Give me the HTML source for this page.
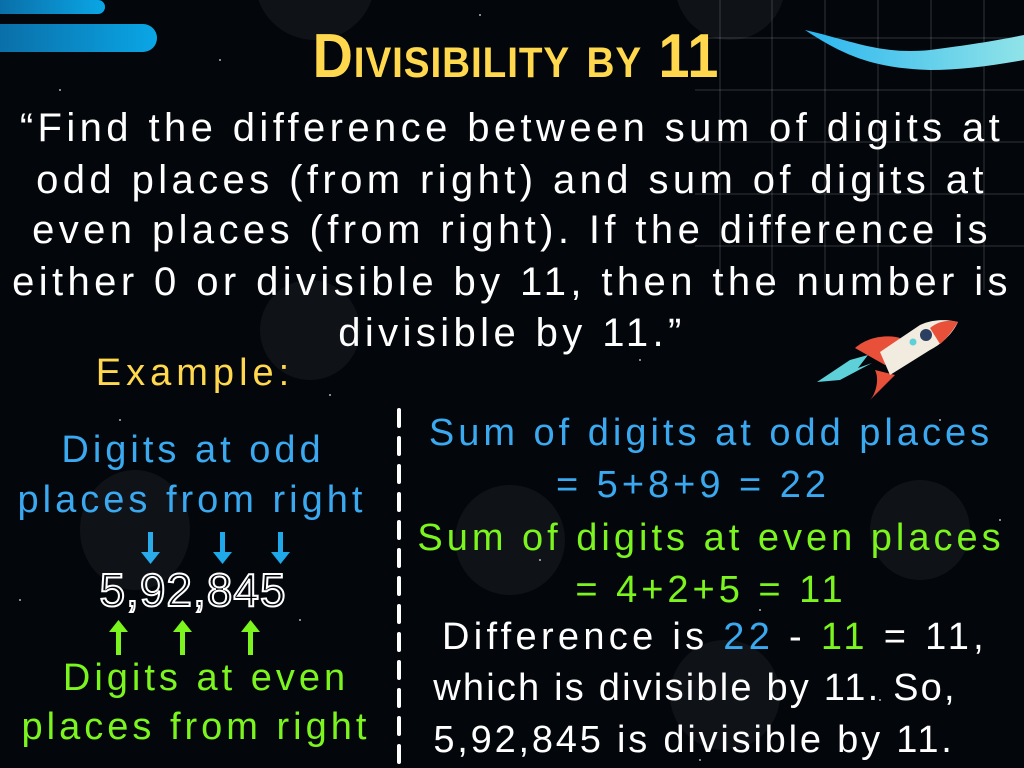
<!DOCTYPE html>
<html><head><meta charset="utf-8"><style>
body{margin:0;width:1024px;height:768px;overflow:hidden;background:#03070c;font-family:"Liberation Sans",sans-serif;position:relative}
.l{position:absolute;left:0;width:1024px;text-align:center;white-space:nowrap;height:44px;line-height:44px}
.q{color:#fff;font-size:40px;letter-spacing:4.4px}
.r{color:#3ba9f0;font-size:38px;letter-spacing:4px}
.g{color:#7cf51f}
.c{position:absolute;border-radius:50%;background:rgba(255,255,255,0.05)}
</style></head><body>
<svg width="1024" height="768" style="position:absolute;left:0;top:0">
<defs><linearGradient id="b" x1="0" x2="1"><stop offset="0" stop-color="#0a6fa8"/><stop offset="1" stop-color="#0aa6e6"/></linearGradient>
<linearGradient id="br" x1="0" x2="1"><stop offset="0" stop-color="#2bb6ef"/><stop offset="1" stop-color="#8fe3e8"/></linearGradient></defs>
<g stroke="rgba(255,255,255,0.18)" stroke-width="1">
<line x1="720" y1="0" x2="720" y2="290"/><line x1="772" y1="0" x2="772" y2="290"/><line x1="825" y1="0" x2="825" y2="290"/><line x1="878" y1="0" x2="878" y2="290"/><line x1="931" y1="0" x2="931" y2="290"/><line x1="984" y1="0" x2="984" y2="290"/>
<line x1="695" y1="38" x2="1024" y2="38"/><line x1="695" y1="90" x2="1024" y2="90"/><line x1="695" y1="142" x2="1024" y2="142"/><line x1="695" y1="194" x2="1024" y2="194"/><line x1="695" y1="246" x2="1024" y2="246"/>
</g>
<path d="M0 0H98a7 7 0 0 1 0 14H0Z" fill="url(#b)"/>
<path d="M0 24H143a14 14 0 0 1 0 28H0Z" fill="url(#b)"/>
<path d="M805 30 C850 40 880 55 930 50 C970 45 1000 40 1024 35 V60 C990 66 960 70 930 70 C880 68 850 60 805 30Z" fill="url(#br)"/>
<g fill="#fff" opacity="0.7">
<circle cx="60" cy="90" r="1"/><circle cx="220" cy="60" r="1"/><circle cx="480" cy="15" r="1"/><circle cx="640" cy="360" r="1"/><circle cx="330" cy="395" r="1"/><circle cx="760" cy="610" r="1"/><circle cx="940" cy="420" r="1"/><circle cx="120" cy="420" r="1"/><circle cx="540" cy="560" r="1"/><circle cx="880" cy="700" r="1"/><circle cx="300" cy="620" r="1"/><circle cx="20" cy="600" r="1"/><circle cx="700" cy="760" r="1"/><circle cx="1000" cy="520" r="1"/>
</g>
<g stroke="#fff" stroke-width="4" stroke-linecap="round" stroke-dasharray="16 12"><line x1="399" y1="410" x2="399" y2="768"/></g>
<g fill="#1fa8ea"><rect x="148" y="532" width="5" height="22"/><path d="M141 552h19l-9.5 12z"/><rect x="220" y="532" width="5" height="22"/><path d="M213 552h19l-9.5 12z"/><rect x="278" y="532" width="5" height="22"/><path d="M271 552h19l-9.5 12z"/></g>
<g fill="#7cf51f"><rect x="116" y="630" width="5" height="25"/><path d="M109 632h19l-9.5 -12z"/><rect x="180" y="630" width="5" height="25"/><path d="M173 632h19l-9.5 -12z"/><rect x="248" y="630" width="5" height="25"/><path d="M241 632h19l-9.5 -12z"/></g>
<g transform="translate(780,300)">
<path d="M37 82 L70 60 L88 55 L78 68 L92 63 L60 80Z" fill="#5dd0d8"/>
<path d="M75 48 C90 35 110 35 120 38 L105 65 Z" fill="#e8503a"/>
<path d="M95 70 C100 80 95 95 90 100 L115 75 Z" fill="#e8503a"/>
<path d="M100 52 L140 25 C155 18 170 20 178 22 C172 35 160 45 150 50 L110 75 Z" fill="#f1ebe0"/>
<path d="M150 28 C160 20 170 20 178 22 C172 32 165 40 160 44 Z" fill="#e8503a"/>
<circle cx="146" cy="35" r="6" fill="#2b4060"/><circle cx="133" cy="42" r="3.5" fill="#5dd0d8"/>
</g>
</svg>
<div class="c" style="left:255px;top:-80px;width:120px;height:120px"></div>
<div class="c" style="left:675px;top:-70px;width:110px;height:110px"></div>
<div class="c" style="left:80px;top:470px;width:110px;height:120px"></div>
<div class="c" style="left:455px;top:485px;width:110px;height:110px"></div>
<div class="c" style="left:260px;top:280px;width:100px;height:100px"></div>
<div class="c" style="left:870px;top:480px;width:100px;height:100px"></div>
<div class="c" style="left:670px;top:640px;width:110px;height:110px"></div>

<div class="l" style="top:26px;color:#ffd84d;font-size:62px;font-weight:bold;font-variant:small-caps;height:62px;line-height:62px;left:4px"><span style="display:inline-block;transform:scaleX(0.9);letter-spacing:1px">Divisibility by 11</span></div>
<div class="l q" style="top:106px">“Find the difference between sum of digits at</div>
<div class="l q" style="top:158px">odd places (from right) and sum of digits at</div>
<div class="l q" style="top:208px">even places (from right). If the difference is</div>
<div class="l q" style="top:260px">either 0 or divisible by 11, then the number is</div>
<div class="l q" style="top:311px">divisible by 11.”</div>
<div class="l" style="top:351px;left:-317px;color:#ffd84d;font-size:38px;letter-spacing:5px">Example:</div>
<div class="l r" style="top:428px;left:-319px">Digits at odd</div>
<div class="l r" style="top:478px;left:-320px">places from right</div>
<div class="l" style="top:568px;left:-319px;font-size:46px;color:transparent;-webkit-text-stroke:2px #fff;letter-spacing:1px">5,92,845</div>
<div class="l r g" style="top:656px;left:-306px">Digits at even</div>
<div class="l r g" style="top:705px;left:-316px">places from right</div>
<div class="l r" style="top:411px;left:199px">Sum of digits at odd places</div>
<div class="l r" style="top:463px;left:181px">= 5+8+9 = 22</div>
<div class="l r g" style="top:516px;left:199px">Sum of digits at even places</div>
<div class="l r g" style="top:568px;left:199px">= 4+2+5 = 11</div>
<div class="l r" style="top:615px;left:203px;color:#fff;letter-spacing:4.3px">Difference is <span style="color:#3ba9f0">22</span> - <span style="color:#7cf51f">11</span> = 11,</div>
<div class="l r" style="top:666px;left:183px;color:#fff;letter-spacing:2.2px">which is divisible by 11. So,</div>
<div class="l r" style="top:718px;left:182px;color:#fff;letter-spacing:2.8px">5,92,845 is divisible by 11.</div>
</body></html>
